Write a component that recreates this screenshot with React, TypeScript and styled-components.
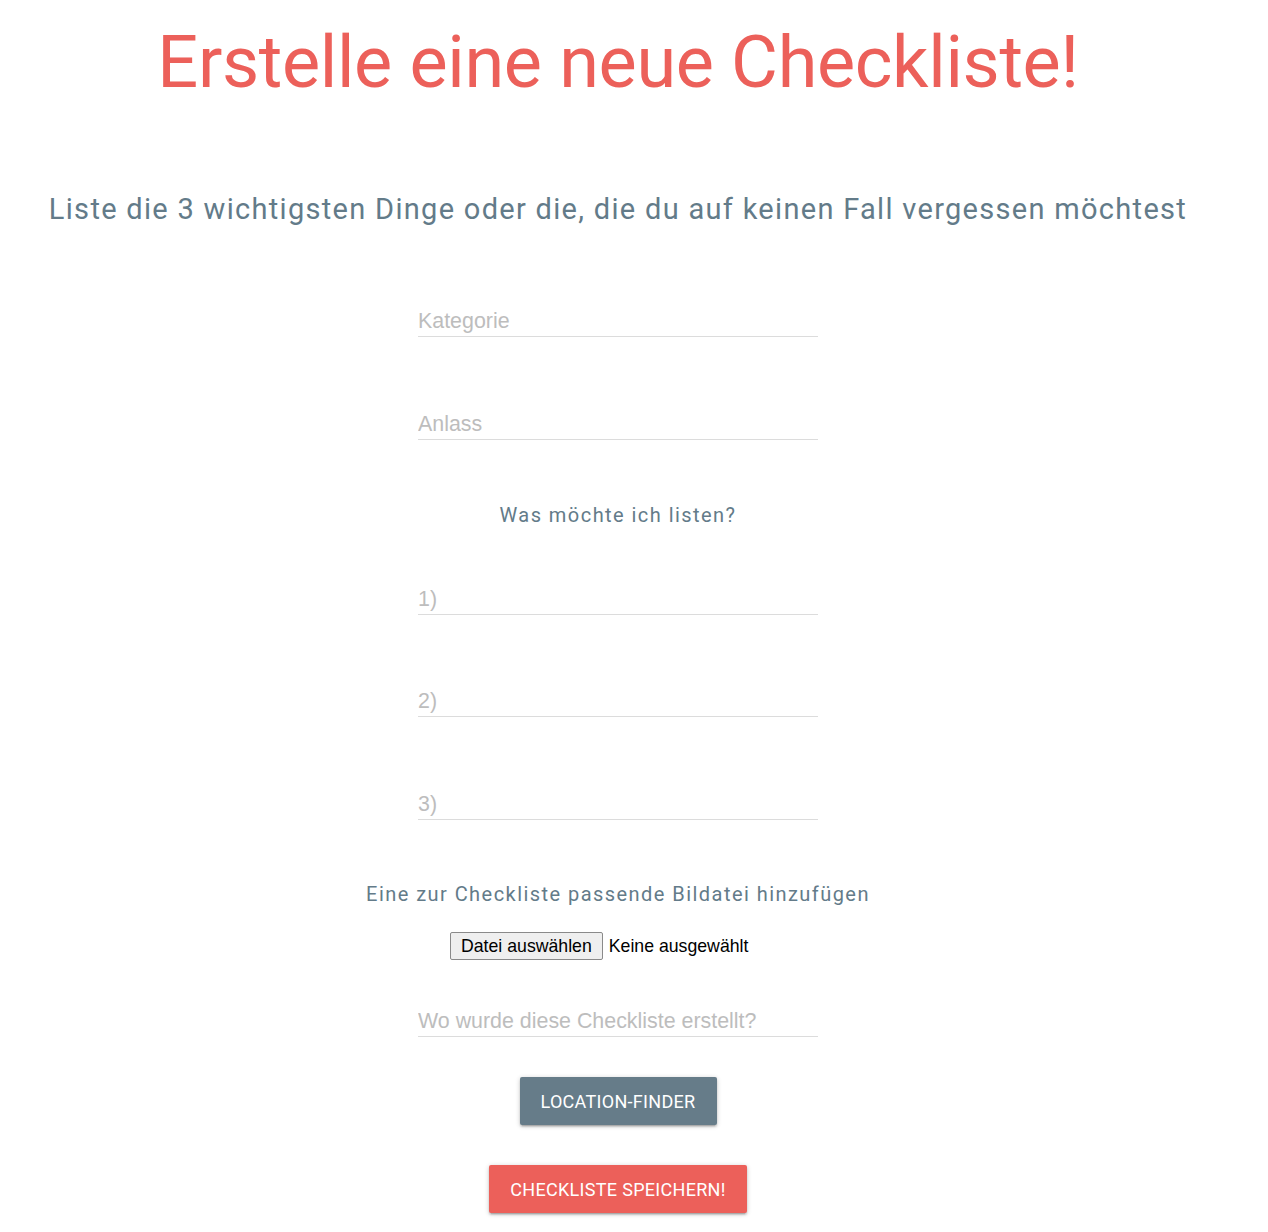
import React from "react";
import styled, { createGlobalStyle } from "styled-components";

const Global = createGlobalStyle`
  html, body { margin: 0; padding: 0; background: #ffffff; }
  body { font-family: Roboto, "Liberation Sans", Arial, sans-serif; }
  * { box-sizing: border-box; }
`;

const Page = styled.main`
  display: flex;
  flex-direction: column;
  align-items: center;
  width: 1236px;
  padding-bottom: 19px;
`;

const Title = styled.h1`
  margin: 21px 0 0;
  font-family: Roboto, sans-serif;
  font-weight: 400;
  font-size: 72px;
  line-height: 84px;
  letter-spacing: -0.35px;
  color: #ec605a;
  white-space: nowrap;
`;

const Subtitle = styled.h4`
  margin: 87px 0 0;
  font-family: Roboto, sans-serif;
  font-weight: 400;
  font-size: 29px;
  line-height: 34px;
  letter-spacing: 1.3px;
  color: #637b89;
  white-space: nowrap;
`;

const Form = styled.form`
  display: flex;
  flex-direction: column;
  align-items: center;
  width: 400px;
  margin-top: 80px;
`;

const Field = styled.input<{ $gap: number }>`
  display: block;
  width: 400px;
  height: 31px;
  margin: ${(p) => p.$gap}px 0 0;
  padding: 0;
  border: none;
  border-bottom: 1px solid #dcdcdc;
  background: transparent;
  outline: none;
  font-family: "Liberation Sans", Arial, sans-serif;
  font-size: 21.4px;
  line-height: 30px;
  color: #333;
  &::placeholder { color: #bdbdbd; }
`;

const SectionLabel = styled.p<{ $gap: number }>`
  margin: ${(p) => p.$gap}px 0 0;
  font-family: Roboto, sans-serif;
  font-size: 20px;
  line-height: 24px;
  letter-spacing: 1.45px;
  color: #637b89;
  white-space: nowrap;
  text-align: center;
`;

const FileRow = styled.div`
  display: flex;
  align-items: center;
  justify-content: flex-start;
  gap: 6px;
  width: 336px;
  margin-top: 26px;
  font-family: "Liberation Sans", Arial, sans-serif;
  font-size: 17.7px;
  color: #000;
  white-space: nowrap;
`;

const FileButton = styled.button`
  height: 28px;
  padding: 0 10px;
  border: 1px solid #8a8a8a;
  border-radius: 2px;
  background: #efefef;
  font-family: "Liberation Sans", Arial, sans-serif;
  font-size: 17.7px;
  line-height: 26px;
  color: #000;
`;

const ActionButton = styled.button<{ $tone: "grey" | "red"; $gap: number }>`
  height: 48px;
  margin-top: ${(p) => p.$gap}px;
  padding: 0 21px;
  border: none;
  border-radius: 2px;
  background: ${(p) => (p.$tone === "grey" ? "#667c89" : "#ec605a")};
  color: #fff;
  font-family: Roboto, sans-serif;
  font-size: 18px;
  letter-spacing: 0.3px;
  text-transform: uppercase;
  box-shadow: 0 2px 2px 0 rgba(0,0,0,0.14), 0 3px 1px -2px rgba(0,0,0,0.12), 0 1px 5px 0 rgba(0,0,0,0.2);
  cursor: pointer;
`;

export default function App() {
  return (
    <>
      <Global />
      <Page>
        <Title>Erstelle eine neue Checkliste!</Title>
        <Subtitle>Liste die 3 wichtigsten Dinge oder die, die du auf keinen Fall vergessen möchtest</Subtitle>
        <Form onSubmit={(e) => e.preventDefault()}>
          <Field $gap={0} placeholder="Kategorie" />
          <Field $gap={72} placeholder="Anlass" />
          <SectionLabel $gap={63}>Was möchte ich listen?</SectionLabel>
          <Field $gap={57} placeholder="1)" />
          <Field $gap={71} placeholder="2)" />
          <Field $gap={72} placeholder="3)" />
          <SectionLabel $gap={62}>Eine zur Checkliste passende Bildatei hinzufügen</SectionLabel>
          <FileRow>
            <FileButton type="button">Datei auswählen</FileButton>
            <span>Keine ausgewählt</span>
          </FileRow>
          <Field $gap={46} placeholder="Wo wurde diese Checkliste erstellt?" />
          <ActionButton type="button" $tone="grey" $gap={40}>Location-Finder</ActionButton>
          <ActionButton type="submit" $tone="red" $gap={40}>Checkliste speichern!</ActionButton>
        </Form>
      </Page>
    </>
  );
}
